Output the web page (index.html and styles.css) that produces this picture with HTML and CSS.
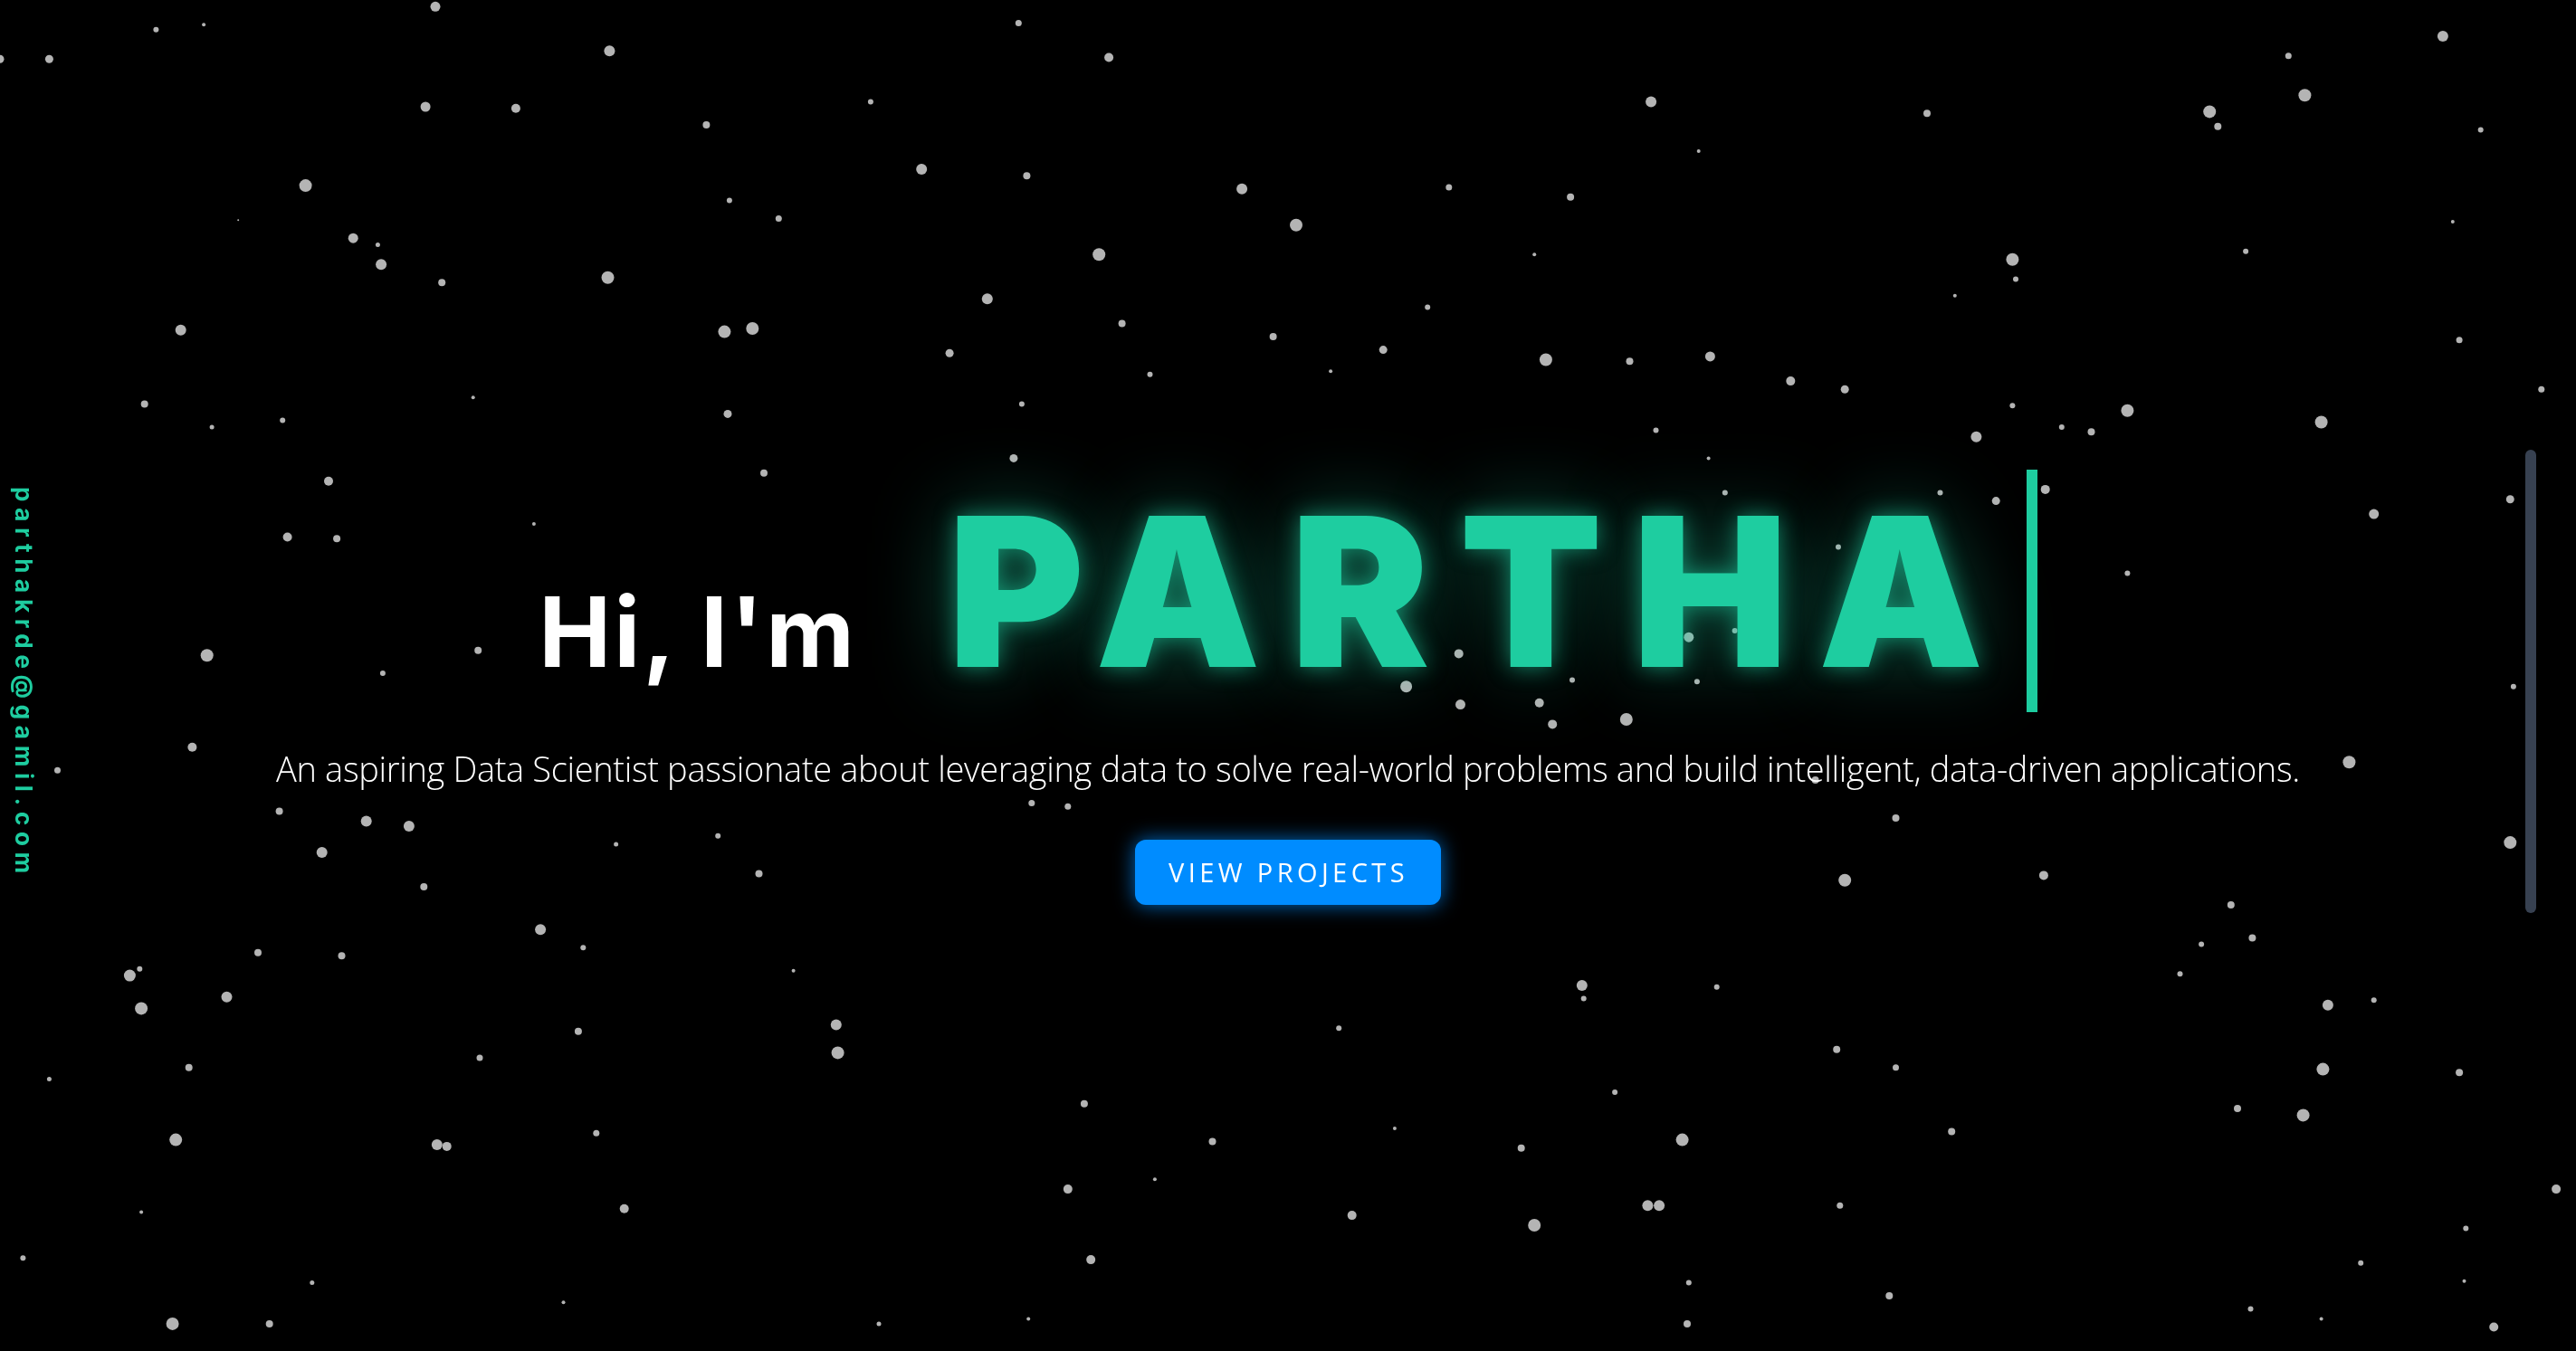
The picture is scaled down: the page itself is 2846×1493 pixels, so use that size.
FILE: index.html
```html
<!DOCTYPE html>
<html lang="en">
<head>
<meta charset="utf-8">
<title>Partha</title>
<link rel="stylesheet" href="styles.css">
</head>
<body>
<div class="starfield" id="stars"></div>
<aside class="side-email">parthakrde@gamil.com</aside>
<main class="hero">
  <h1 class="hero-title"><span class="greet">Hi, I'm</span><span class="name">PARTHA</span></h1>
  <p class="hero-sub">An aspiring Data Scientist passionate about leveraging data to solve real-world problems and build intelligent, data-driven applications.</p>
  <a class="btn" href="#projects">VIEW PROJECTS</a>
</main>
<div class="scroll-thumb"></div>
<script src="script.js"></script>
</body>
</html>
```

FILE: styles.css
```css
html, body {
  margin: 0;
  padding: 0;
  background: #000;
  overflow: hidden;
  height: 100%;
}

.starfield {
  position: fixed;
  inset: 0;
  z-index: 0;
  pointer-events: none;
}

.starfield svg {
  display: block;
  width: 100%;
  height: 100%;
}

.hero {
  position: relative;
  z-index: 1;
  height: 100vh;
  box-sizing: border-box;
  padding-top: 26px;
  display: flex;
  flex-direction: column;
  align-items: center;
  justify-content: center;
}

.hero-title {
  margin: 0;
  display: flex;
  align-items: baseline;
  gap: 100px;
  font-family: Inter, "Noto Sans", sans-serif;
}

.greet {
  font-size: 107px;
  font-weight: 700;
  line-height: 1;
  letter-spacing: 3px;
  color: #fff;
}

.name {
  font-size: 230px;
  font-weight: 900;
  line-height: 268px;
  letter-spacing: 33px;
  color: #1ecda0;
  padding-right: 14px;
  border-right: 12px solid #1ecda0;
  text-shadow: 0 0 24px rgba(30, 205, 160, 0.6), 0 0 90px rgba(30, 205, 160, 0.45);
}

.hero-sub {
  margin: 34px 0 0;
  font-family: "Open Sans", "Noto Sans", sans-serif;
  font-weight: 300;
  font-size: 38px;
  line-height: 57px;
  letter-spacing: -0.35px;
  color: #fff;
  text-align: center;
}

.btn {
  margin-top: 50px;
  display: block;
  height: 72px;
  line-height: 72px;
  padding: 0 36px 0 37px;
  background: #008cff;
  color: #fff;
  text-decoration: none;
  border-radius: 12px;
  font-family: "Open Sans", "Noto Sans", sans-serif;
  font-weight: 400;
  font-size: 29px;
  letter-spacing: 4.4px;
  box-shadow: 0 0 22px rgba(0, 140, 255, 0.75);
}

.side-email {
  position: fixed;
  left: 13px;
  top: calc(50% + 8px);
  transform: translateY(-50%);
  z-index: 2;
  writing-mode: vertical-rl;
  font-family: Inter, "Noto Sans", sans-serif;
  font-weight: 700;
  font-size: 26px;
  line-height: 1;
  letter-spacing: 6.7px;
  color: #1ecda0;
}

.scroll-thumb {
  position: fixed;
  right: 44px;
  top: 497px;
  width: 12px;
  height: 512px;
  border-radius: 6px;
  background: #374151;
  z-index: 2;
}
```

FILE: script.js
```js
(function () {
  var S = 1.815;
  var stars = [
    [265,4,5.5],[95,18,3],[124,15,2],[30,36,4.5],[0,36,4.5],[259,65,5.5],[186,113,7],[215,145,5.5],[230,149,2.5],[232,161,6],[145,134,1],
    [371,31,6],[314,66,5],[430,76,4],[474,133,3.5],[444,122,3],[370,169,7],[269,172,4],[441,202,7],[458,200,7],[110,201,6],[88,246,4],[129,260,2.5],[172,256,3],[288,242,2],[200,293,5],[175,327,5],[205,328,4],[325,319,2],[443,252,4.5],[465,288,4],
    [530,62,3],[561,103,6],[625,107,4],[620,14,3.5],[675,35,5],[669,155,7],[601,182,6],[578,215,4.5],[622,246,3],[617,279,4.5],[683,197,4],[700,228,3],
    [756,115,6],[789,137,7],[882,114,3.5],[869,187,3],[775,205,4],[842,213,4.5],[810,226,2],
    [956,120,4],[941,219,7],[992,220,4],[1005,62,6],[1034,92,2],[934,155,2],
    [1041,217,5.5],[1090,232,5],[1123,237,4.5],[1173,69,4],[1008,262,3],[1050,300,3],[1040,279,2],
    [1225,158,7],[1227,170,3],[1203,266,6],[1225,247,3],[1255,260,3],[1273,263,4],[1295,250,7],[1181,300,3],[1190,180,2],
    [1345,68,7],[1350,77,4],[1403,58,7],[1393,34,3.5],[1487,22,6],[1510,79,3],[1367,153,3],[1493,135,2],[1497,207,3.5],[1413,257,7],[1547,237,3.5],[1528,304,4.5],[1445,313,5.5],[1295,349,3],
    [1215,305,4.5],[1245,298,5],[1119,333,3],[957,414,3],[1033,415,3],[1056,384,3],
    [126,399,7],[233,410,3],[291,396,4],[117,455,5],[35,469,3.5],[223,500,6],[249,503,6],[170,494,4],[196,519,6],[258,540,4],[375,514,2.5],[437,509,3],[462,532,4],
    [1028,388,5.5],[888,398,5],[856,418,6.5],[889,429,5.5],[937,428,5],[945,441,5],[990,438,7],[1105,475,4],[1154,498,4],[628,489,3.5],[650,491,3.5],
    [1530,418,3],[1430,464,7],[1528,513,7],[1123,536,7],[1244,533,5],[1358,551,4],
    [329,566,6],[157,580,4],[208,582,4],[355,577,3],[1371,571,4],[1340,575,3],[79,594,6.5],[85,590,3],[86,614,7],[138,607,6],[483,591,2],[963,600,6],[964,608,3],[1045,601,3],[1417,612,6],[1445,609,3],[1327,593,3],
    [509,624,6],[510,641,7],[352,628,4],[292,644,3.5],[1118,639,4],[1154,650,3.5],[815,626,3],[115,650,4],[1414,651,7],[1497,653,4],[660,672,4],[1362,675,4],[1402,679,7],[983,665,3],[30,657,2.5],
    [107,694,7],[266,697,6],[272,698,5],[363,690,3.5],[738,695,4],[926,699,4],[1024,694,7],[1188,689,4],[849,687,2],
    [650,724,5],[703,718,2],[380,736,5],[823,740,5],[934,746,7],[1003,734,6],[1010,734,6],[1120,734,3.5],[1556,724,5],[1501,748,3],[86,738,2],
    [664,767,5],[14,766,3],[190,781,2.5],[343,793,2],[1028,781,3],[1437,769,3],[1150,789,4],[1370,797,3],[1500,780,2],
    [105,806,7],[164,806,4],[626,803,2],[535,806,2.5],[1027,806,4],[1518,808,5],[1413,803,2]
  ];
  var ns = 'http://www.w3.org/2000/svg';
  var svg = document.createElementNS(ns, 'svg');
  svg.setAttribute('viewBox', '0 0 2846 1493');
  svg.setAttribute('preserveAspectRatio', 'none');
  for (var i = 0; i < stars.length; i++) {
    var c = document.createElementNS(ns, 'circle');
    c.setAttribute('cx', (stars[i][0] * S).toFixed(1));
    c.setAttribute('cy', (stars[i][1] * S).toFixed(1));
    c.setAttribute('r', stars[i][2]);
    c.setAttribute('fill', '#b4b4b4');
    svg.appendChild(c);
  }
  document.getElementById('stars').appendChild(svg);
})();
```
